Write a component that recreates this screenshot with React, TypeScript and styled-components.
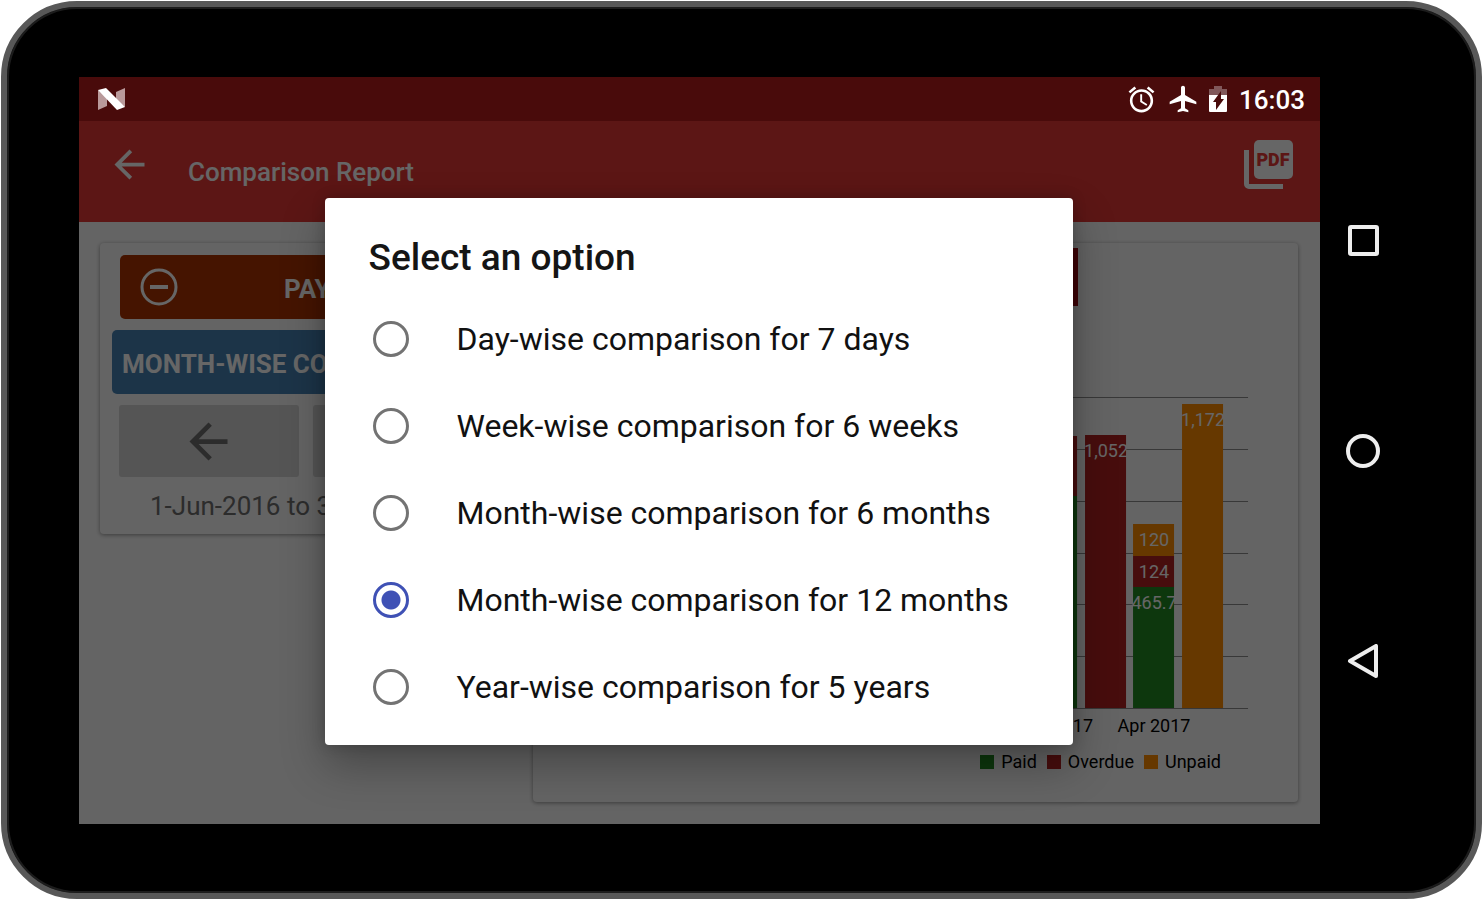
import React, { useState } from "react";
import styled, { createGlobalStyle } from "styled-components";
import { MdAlarm, MdAirplanemodeActive, MdArrowBack } from "react-icons/md";

const GlobalStyle = createGlobalStyle`
  *, *::before, *::after { box-sizing: border-box; }
  body {
    margin: 0;
    background: #fff;
    font-family: Roboto, "Liberation Sans", sans-serif;
  }
  button { font-family: inherit; border: 0; padding: 0; cursor: pointer; }
  svg { display: block; flex: none; }
`;

const Bezel = styled.div`
  display: flex;
  min-height: 100vh;
  padding: 1px;
  background: #fff;
`;

const Tablet = styled.div`
  flex: 1;
  min-width: 0;
  display: flex;
  padding: 70px 70px 69px 72px;
  background: #000;
  border: 6px solid #585858;
  border-radius: 76px;
  box-shadow: inset 0 0 0 2px #1c1c1c;
`;

const Screen = styled.div`
  flex: 1;
  min-width: 0;
  display: flex;
  flex-direction: column;
`;

const StatusBar = styled.header`
  display: flex;
  align-items: center;
  height: 44px;
  padding: 0 15px 0 19px;
  background: #490b0b;
  color: #fff;
`;

const StatusIcons = styled.div`
  display: flex;
  align-items: center;
  gap: 10px;
  margin-left: auto;
`;

const Clock = styled.time`
  margin-left: 2px;
  padding-top: 2px;
  font-size: 26px;
  font-weight: 500;
  line-height: 42px;
`;

const AppArea = styled.div`
  position: relative;
  flex: 1;
  display: flex;
  flex-direction: column;
  background: #fafafa;
`;

const AppBar = styled.div`
  display: flex;
  align-items: center;
  height: 101px;
  padding: 0 27px 0 28px;
  background: #e53935;
  color: #fff;
`;

const IconButton = styled.button`
  display: flex;
  margin-bottom: 14px;
  background: none;
  color: inherit;
`;

const AppTitle = styled.h1`
  flex: 1;
  margin: 0 0 0 36px;
  font-size: 26px;
  font-weight: 500;
  line-height: 32px;
`;

const Content = styled.main`
  flex: 1;
  display: grid;
  grid-template-columns: 35fr 65fr;
  gap: 21px;
  align-items: start;
  padding: 21px 22px 22px 21px;
`;

const Card = styled.section<{ $fill?: boolean }>`
  align-self: ${(p) => (p.$fill ? "stretch" : "start")};
  display: flex;
  flex-direction: column;
  min-width: 0;
  background: #fafafa;
  border-radius: 4px;
  box-shadow: 0 1px 4px rgba(0, 0, 0, 0.4);
`;

const Filters = styled(Card)`
  gap: 11px;
  padding: 12px;
`;

const FilterButton = styled.button<{ $color: string; $inset: number }>`
  display: flex;
  align-items: center;
  height: 64px;
  margin: 0 ${(p) => p.$inset}px;
  padding: 0 ${(p) => (p.$inset ? 20 : 10)}px;
  border-radius: 5px;
  background: ${(p) => p.$color};
  color: #fff;
  font-size: 26px;
  font-weight: 700;
  line-height: 32px;
  white-space: nowrap;
`;

const FilterLabel = styled.span<{ $indent?: boolean }>`
  margin-left: ${(p) => (p.$indent ? 106 : 0)}px;
  padding-top: 3px;
`;

const Stepper = styled.div`
  display: grid;
  grid-template-columns: 1fr 1fr;
  gap: 14px;
  margin: 0 7px;
`;

const StepButton = styled.button`
  display: flex;
  align-items: center;
  justify-content: center;
  height: 72px;
  border-radius: 3px;
  background: #d4d4d4;
  color: #6e6e6e;
`;

const Period = styled.p`
  margin: 2px 38px 0;
  color: #6e6e6e;
  font-size: 26px;
  line-height: 32px;
`;

const Banner = styled.div`
  align-self: center;
  width: 325px;
  max-width: 100%;
  height: 58px;
  margin-top: 5px;
  background: #a00810;
`;

const Chart = styled.svg`
  width: 100%;
  margin-top: 80px;
  font-size: 18px;
`;

const Legend = styled.ul`
  display: flex;
  justify-content: flex-end;
  gap: 10px;
  margin: 0;
  padding: 0 77px 0 0;
  list-style: none;
  color: #000;
  font-size: 18px;
  line-height: 24px;
`;

const LegendItem = styled.li<{ $color: string }>`
  display: flex;
  align-items: center;
  gap: 7px;
  &::before {
    content: "";
    width: 14px;
    height: 14px;
    background: ${(p) => p.$color};
  }
`;

const Scrim = styled.div`
  position: absolute;
  inset: 0;
  display: flex;
  align-items: center;
  justify-content: center;
  padding: 0 2px 2px 0;
  background: rgba(0, 0, 0, 0.6);
`;

const Dialog = styled.form`
  width: 748px;
  max-width: 100%;
  padding: 40px 44px 15px;
  border-radius: 4px;
  background: #fff;
  box-shadow: 0 20px 44px rgba(0, 0, 0, 0.3), 0 0 14px rgba(0, 0, 0, 0.2);
`;

const DialogTitle = styled.h2`
  margin: 0 0 17px;
  color: #151515;
  font-size: 37px;
  font-weight: 500;
  line-height: 40px;
`;

const Option = styled.label`
  display: flex;
  align-items: center;
  gap: 48px;
  height: 87px;
  padding-left: 4px;
  color: #111;
  font-size: 32px;
  line-height: 40px;
  white-space: nowrap;
`;

const Radio = styled.input`
  appearance: none;
  flex: none;
  width: 36px;
  height: 36px;
  margin: 0;
  border: 3px solid #737373;
  border-radius: 50%;
  &:checked {
    border-color: #3f51b5;
    background: radial-gradient(circle, #3f51b5 9px, #fff 10px);
  }
`;

const NavBar = styled.nav`
  display: flex;
  flex-direction: column;
  align-items: center;
  justify-content: center;
  gap: 176px;
  width: 86px;
`;

const NavButton = styled.button`
  display: flex;
  background: none;
`;

const GREEN = "#228b22";
const RED = "#b22222";
const ORANGE = "#ff8c00";

const NougatIcon = () => (
  <svg width="27" height="22" viewBox="0 0 27 22" aria-hidden="true">
    <path d="M0 2 9 9v9L0 22z" fill="#b99a9b" />
    <path d="M27 0v19L18 12V4z" fill="#b99a9b" />
    <path d="M0 2 8 0 27 19 19 22z" fill="#fff" />
  </svg>
);

const BatteryIcon = () => (
  <svg width="18" height="32" viewBox="0 0 18 32" aria-hidden="true">
    <path d="M0 6h5V3h8v3h5v6H0z" fill="#80585a" />
    <path d="M0 12h18v16a1 1 0 0 1-1 1H1a1 1 0 0 1-1-1z" fill="#fff" />
    <path d="M12 8v8h3L7 27v-8H4z" fill="#490b0b" />
  </svg>
);

const PdfIcon = () => (
  <svg width="49" height="49" viewBox="0 0 49 49" aria-hidden="true">
    <path d="M0 10h5v34h34v5H5a5 5 0 0 1-5-5z" fill="#fff" />
    <rect x="10" width="39" height="39" rx="5" fill="#fff" />
    <text x="29" y="26" textAnchor="middle" fontSize="18" fontWeight="900" fill="#e53935">
      PDF
    </text>
  </svg>
);

const MinusIcon = () => (
  <svg width="38" height="38" viewBox="0 0 38 38" fill="none" stroke="#fff" strokeWidth="3" aria-hidden="true">
    <circle cx="19" cy="19" r="17" />
    <path d="M10 19h18" strokeWidth="4" />
  </svg>
);

type Segment = { top: number; bottom: number; color: string; label?: string };
const BARS: { x: number; segments: Segment[] }[] = [
  {
    x: 503,
    segments: [
      { top: 50, bottom: 110, color: RED },
      { top: 110, bottom: 322, color: GREEN },
    ],
  },
  { x: 552, segments: [{ top: 49, bottom: 322, color: RED, label: "1,052" }] },
  {
    x: 600,
    segments: [
      { top: 138, bottom: 170, color: ORANGE, label: "120" },
      { top: 170, bottom: 201, color: RED, label: "124" },
      { top: 201, bottom: 322, color: GREEN, label: "465.7" },
    ],
  },
  { x: 649, segments: [{ top: 18, bottom: 322, color: ORANGE, label: "1,172" }] },
];
const GRID = [11, 63, 115, 167, 218, 270, 322];

const OPTIONS = [
  "Day-wise comparison for 7 days",
  "Week-wise comparison for 6 weeks",
  "Month-wise comparison for 6 months",
  "Month-wise comparison for 12 months",
  "Year-wise comparison for 5 years",
];

export default function App() {
  const [selected, setSelected] = useState(3);
  return (
    <Bezel>
      <GlobalStyle />
      <Tablet>
        <Screen>
          <StatusBar>
            <NougatIcon />
            <StatusIcons>
              <MdAlarm size={31} />
              <MdAirplanemodeActive size={32} />
              <BatteryIcon />
              <Clock>16:03</Clock>
            </StatusIcons>
          </StatusBar>
          <AppArea>
            <AppBar>
              <IconButton aria-label="Back">
                <MdArrowBack size={45} />
              </IconButton>
              <AppTitle>Comparison Report</AppTitle>
              <IconButton aria-label="Export as PDF">
                <PdfIcon />
              </IconButton>
            </AppBar>
            <Content>
              <Filters>
                <FilterButton $color="#ad3400" $inset={8}>
                  <MinusIcon />
                  <FilterLabel $indent>PAY</FilterLabel>
                </FilterButton>
                <FilterButton $color="#4682b4" $inset={0}>
                  <FilterLabel>MONTH-WISE CO</FilterLabel>
                </FilterButton>
                <Stepper>
                  <StepButton aria-label="Previous period">
                    <MdArrowBack size={57} />
                  </StepButton>
                  <StepButton aria-label="Next period" />
                </Stepper>
                <Period>1-Jun-2016 to 3</Period>
              </Filters>
              <Card $fill>
                <Banner />
                <Chart viewBox="0 0 765 364" role="img" aria-label="Comparison chart">
                  {GRID.map((y) => (
                    <path key={y} d={`M60 ${y + 0.5}H715`} stroke="#8c8c8c" />
                  ))}
                  {BARS.map((bar) =>
                    bar.segments.map((s) => (
                      <g key={`${bar.x}-${s.top}`}>
                        <rect x={bar.x} y={s.top} width="41" height={s.bottom - s.top} fill={s.color} />
                        {s.label && (
                          <text x={bar.x + 21} y={s.top + 22} textAnchor="middle" fill="#fff">
                            {s.label}
                          </text>
                        )}
                      </g>
                    ))
                  )}
                  <text x="560" y="346" textAnchor="end">17</text>
                  <text x="621" y="346" textAnchor="middle">Apr 2017</text>
                </Chart>
                <Legend>
                  <LegendItem $color={GREEN}>Paid</LegendItem>
                  <LegendItem $color={RED}>Overdue</LegendItem>
                  <LegendItem $color={ORANGE}>Unpaid</LegendItem>
                </Legend>
              </Card>
            </Content>
            <Scrim>
              <Dialog role="dialog" aria-labelledby="dialog-title">
                <DialogTitle id="dialog-title">Select an option</DialogTitle>
                {OPTIONS.map((text, i) => (
                  <Option key={text}>
                    <Radio
                      type="radio"
                      name="comparison"
                      checked={selected === i}
                      onChange={() => setSelected(i)}
                    />
                    {text}
                  </Option>
                ))}
              </Dialog>
            </Scrim>
          </AppArea>
        </Screen>
        <NavBar aria-label="System">
          <NavButton aria-label="Recent apps">
            <svg width="34" height="34" fill="none" stroke="#eee" strokeWidth="4">
              <rect x="4" y="3" width="27" height="27" rx="1" />
            </svg>
          </NavButton>
          <NavButton aria-label="Home">
            <svg width="34" height="34" fill="none" stroke="#eee" strokeWidth="4">
              <circle cx="17" cy="17" r="15" />
            </svg>
          </NavButton>
          <NavButton aria-label="Back">
            <svg width="34" height="34" fill="none" stroke="#eee" strokeWidth="4" strokeLinejoin="round">
              <path d="M4 17 30 2v30z" />
            </svg>
          </NavButton>
        </NavBar>
      </Tablet>
    </Bezel>
  );
}
